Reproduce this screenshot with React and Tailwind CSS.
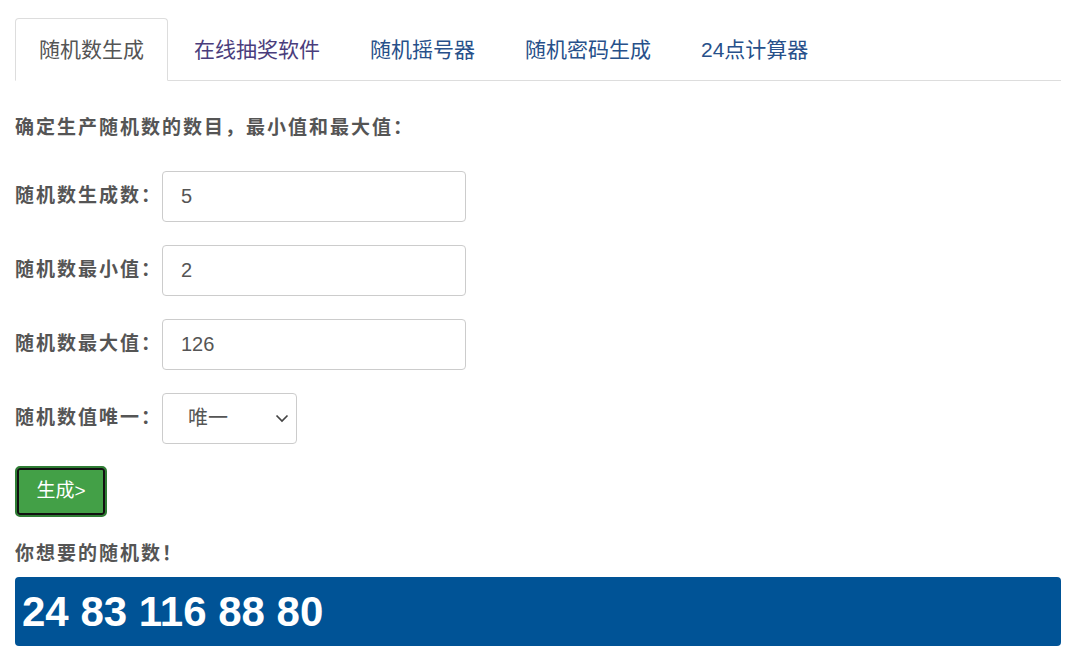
import React from 'react'

const font = "font-['Liberation_Sans','Noto_Sans_CJK_SC',sans-serif]"

const tabs = [
  { name: '随机数生成', active: true },
  { name: '在线抽奖软件', color: 'text-[#4a3d7c]' },
  { name: '随机摇号器', color: 'text-[#27508a]' },
  { name: '随机密码生成', color: 'text-[#27508a]' },
  { name: '24点计算器', color: 'text-[#27508a]' },
]

const Row = ({ label, children }) => (
  <div className="flex items-center gap-[8px]">
    <label className="w-[139px] text-[19px] font-bold text-[#555] tracking-[2px] whitespace-nowrap">{label}</label>
    {children}
  </div>
)

const Field = ({ value }) => (
  <input
    defaultValue={value}
    className="w-[304px] h-[51px] px-[18px] border border-[#ccc] rounded-[4px] text-[20px] text-[#555] outline-none"
  />
)

export default function App() {
  return (
    <div className={`min-h-screen bg-white pl-[15px] pr-[9px] pt-[18px] ${font}`}>
      <ul className="flex border-b border-[#ddd]">
        {tabs.map(t => (
          <li key={t.name} className="-mb-px mr-[2px]">
            <a
              href="#"
              className={`block h-[63px] px-[23px] leading-[61px] text-[21px] rounded-t-[4px] border ${
                t.active ? 'border-[#ddd] border-b-white bg-white text-[#555]' : 'border-transparent ' + t.color
              }`}
            >
              {t.name}
            </a>
          </li>
        ))}
      </ul>

      <p className="mt-[33px] text-[19px] font-bold text-[#555] tracking-[2px]">确定生产随机数的数目，最小值和最大值：</p>

      <div className="mt-[28px] flex flex-col gap-[23px]">
        <Row label="随机数生成数："><Field value="5" /></Row>
        <Row label="随机数最小值："><Field value="2" /></Row>
        <Row label="随机数最大值："><Field value="126" /></Row>
        <Row label="随机数值唯一：">
          <div className="relative w-[135px] h-[51px]">
            <select className="appearance-none w-full h-full pl-[25px] border border-[#ccc] rounded-[4px] text-[20px] text-[#555] bg-white outline-none">
              <option>唯一</option>
              <option>不唯一</option>
            </select>
            <svg className="absolute right-[8px] top-[21px] pointer-events-none" width="14" height="9" viewBox="0 0 14 9" fill="none">
              <path d="M1.5 1.5l5.5 5.5 5.5-5.5" stroke="#444" strokeWidth="1.7" />
            </svg>
          </div>
        </Row>
      </div>

      <button className="mt-[22px] block w-[92px] h-[51px] rounded-[5px] bg-[#43a047] border-2 border-[#2f7d34] shadow-[inset_0_0_0_2px_#111] text-white text-[19px]">
        生成&gt;
      </button>

      <p className="mt-[23px] text-[19px] font-bold text-[#555] tracking-[2px]">你想要的随机数！</p>

      <div className="mt-[9px] h-[69px] rounded-[4px] bg-[#005396] px-[7px] flex items-center">
        <span className="text-white font-bold text-[42px] font-['Liberation_Sans',sans-serif]">24 83 116 88 80</span>
      </div>
    </div>
  )
}
